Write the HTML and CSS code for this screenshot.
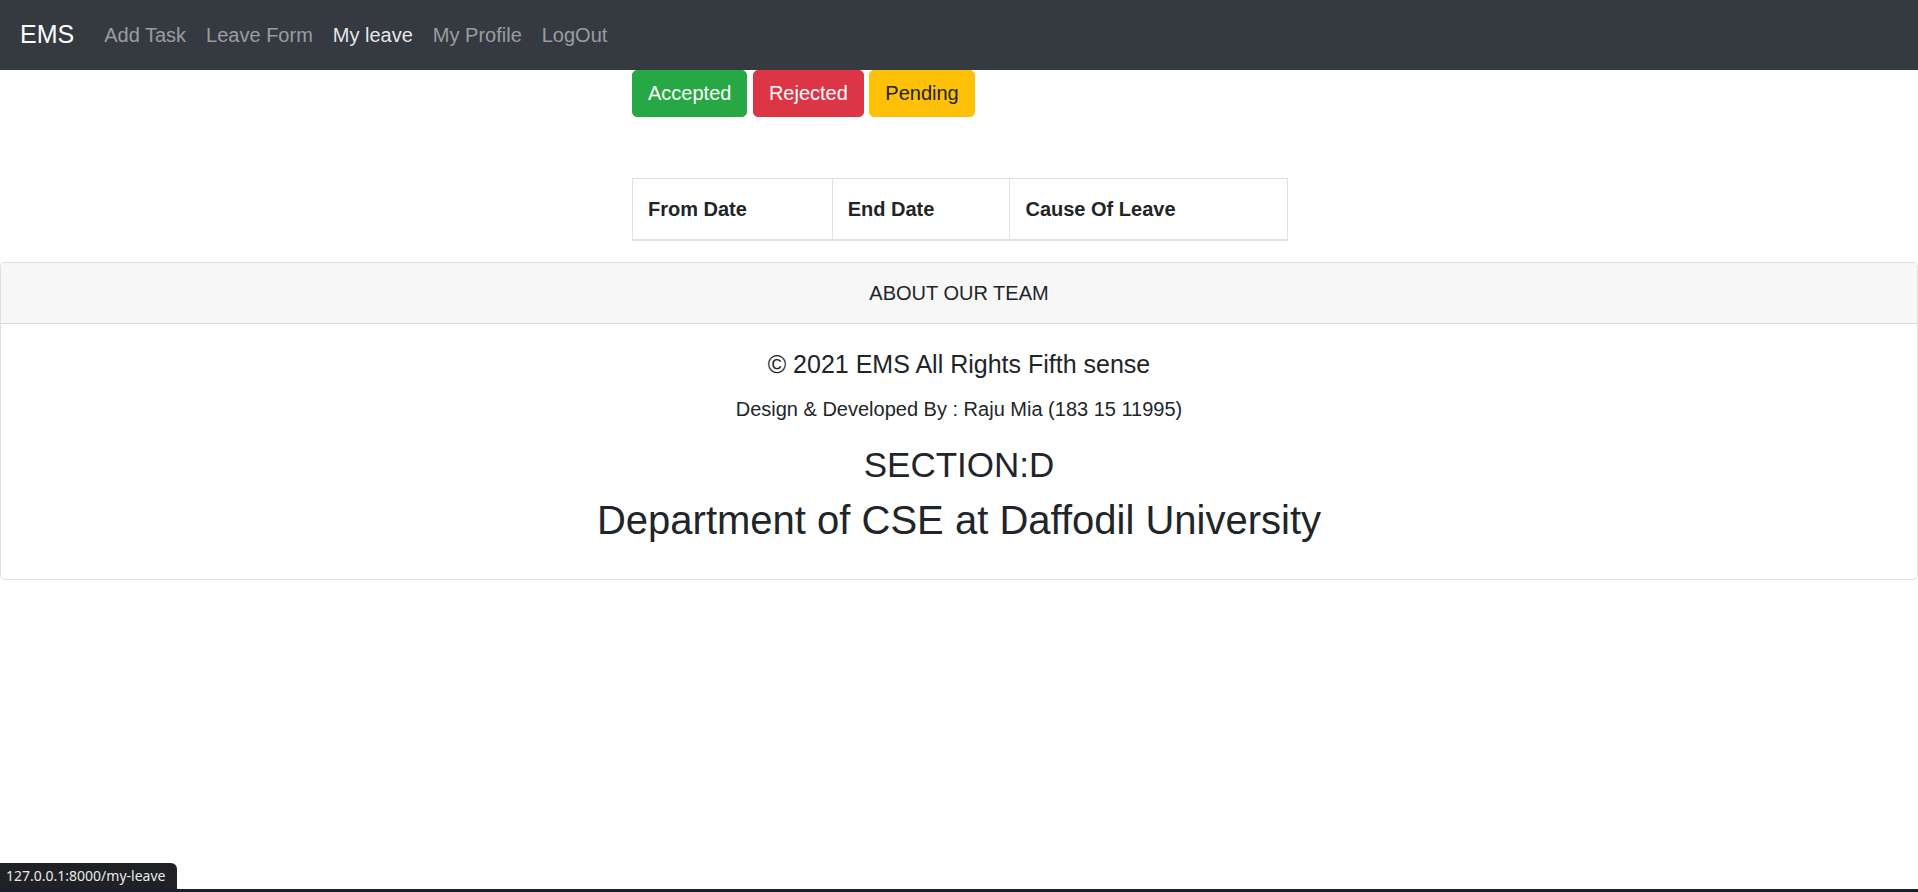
FILE: index.html
```html
<!DOCTYPE html>
<html lang="en">
<head>
<meta charset="utf-8">
<title>EMS - My leave</title>
<link rel="stylesheet" href="styles.css">
</head>
<body>
<nav class="navbar">
  <a class="brand" href="#">EMS</a>
  <ul class="nav">
    <li><a class="nav-link" href="#">Add Task</a></li>
    <li><a class="nav-link" href="#">Leave Form</a></li>
    <li><a class="nav-link active" href="#">My leave</a></li>
    <li><a class="nav-link" href="#">My Profile</a></li>
    <li><a class="nav-link" href="#">LogOut</a></li>
  </ul>
</nav>
<main class="content">
  <div class="btn-row">
    <button class="btn btn-success">Accepted</button>
    <button class="btn btn-danger">Rejected</button>
    <button class="btn btn-warning">Pending</button>
  </div>
  <table class="leave-table">
    <thead>
      <tr>
        <th class="col-from">From Date</th>
        <th class="col-end">End Date</th>
        <th class="col-cause">Cause Of Leave</th>
      </tr>
    </thead>
  </table>
</main>
<footer class="card">
  <div class="card-header">ABOUT OUR TEAM</div>
  <div class="card-body">
    <h5 class="rights">© 2021 EMS All Rights Fifth sense</h5>
    <p class="dev">Design &amp; Developed By : Raju Mia (183 15 11995)</p>
    <h3 class="section">SECTION:D</h3>
    <h2 class="dept">Department of CSE at Daffodil University</h2>
  </div>
</footer>
<div class="status-bubble">127.0.0.1:8000/my-leave</div>
<div class="taskbar-edge"></div>
</body>
</html>
```
FILE: styles.css
```css
* { box-sizing: border-box; }
html, body { margin: 0; padding: 0; }
body {
  font-family: "Liberation Sans", Arial, sans-serif;
  font-size: 20px;
  line-height: 1.5;
  color: #212529;
  background: #fff;
  width: 1918px;
  height: 892px;
  overflow: hidden;
  position: relative;
}
.navbar {
  display: flex;
  align-items: center;
  height: 69.5px;
  padding: 0 20px;
  background: #343a40;
}
.brand {
  font-size: 25px;
  line-height: 37.5px;
  color: #fff;
  text-decoration: none;
  margin-right: 20px;
}
.nav {
  display: flex;
  list-style: none;
  margin: 0;
  padding: 0;
}
.nav-link {
  display: block;
  padding: 10px;
  font-size: 20px;
  line-height: 30px;
  color: rgba(255,255,255,.5);
  text-decoration: none;
}
.nav-link.active { color: rgba(255,255,255,.9); }
.content {
  padding-left: 632px;
}
.btn-row {
  display: flex;
  gap: 5.5px;
}
.btn {
  font-family: "Liberation Sans", Arial, sans-serif;
  font-size: 20px;
  line-height: 30px;
  padding: 7.75px 15px;
  border: 1.25px solid transparent;
  border-radius: 5px;
  cursor: pointer;
}
.btn-success { background: #28a745; border-color: #28a745; color: #fff; }
.btn-danger { background: #dc3545; border-color: #dc3545; color: #fff; }
.btn-warning { background: #ffc107; border-color: #ffc107; color: #212529; }
.leave-table {
  margin-top: 61px;
  margin-bottom: 21px;
  border-collapse: collapse;
  width: 656px;
}
.leave-table th {
  text-align: left;
  font-weight: bold;
  padding: 15px;
  line-height: 30px;
  border: 1px solid #dee2e6;
  border-bottom: 2.5px solid #dee2e6;
}
.col-from { width: 200px; }
.col-end { width: 178px; }
.col-cause { width: 278px; }
.card {
  width: 1918px;
  border: 1px solid rgba(0,0,0,.125);
  border-radius: 5px;
  background: #fff;
}
.card-header {
  padding: 15px 25px;
  line-height: 30px;
  text-align: center;
  background: #f7f7f7;
  border-bottom: 1px solid rgba(0,0,0,.125);
  border-radius: 5px 5px 0 0;
}
.card-body {
  padding: 25px;
  text-align: center;
}
.card-body h5, .card-body h3, .card-body h2, .card-body p {
  margin: 0;
  font-weight: 500;
}
.rights {
  font-size: 25px;
  line-height: 30px;
  margin-bottom: 15px !important;
}
.dev {
  font-size: 20px;
  line-height: 30px;
  margin-bottom: 20px !important;
}
.section {
  font-size: 35px;
  line-height: 42px;
  margin-bottom: 10px !important;
}
.dept {
  font-size: 40px;
  line-height: 48px;
  margin-bottom: 10px !important;
}
.status-bubble {
  position: absolute;
  left: 0;
  bottom: 3px;
  width: 177px;
  height: 26px;
  padding: 0 0 0 6px;
  background: #202124;
  color: #e8eaed;
  font-family: "Noto Sans", "Open Sans", sans-serif;
  font-size: 14px;
  line-height: 26px;
  border-top-right-radius: 6px;
  white-space: nowrap;
}
.taskbar-edge {
  position: absolute;
  left: 0;
  right: 0;
  bottom: 0;
  height: 3px;
  background: #1b1e2e;
}
```
